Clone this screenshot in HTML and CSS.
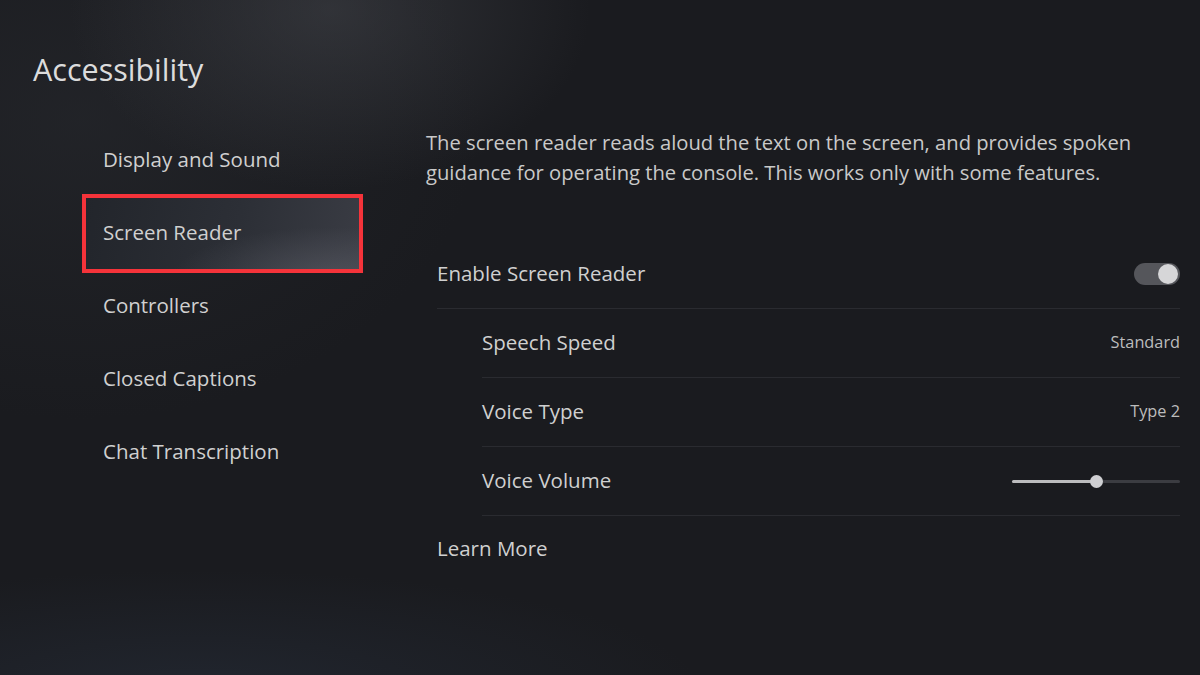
FILE: index.html
```html
<!DOCTYPE html>
<html lang="en">
<head>
<meta charset="utf-8">
<title>Accessibility - Screen Reader</title>
<link rel="stylesheet" href="styles.css">
</head>
<body>
<div class="screen">
  <header class="header">
    <h1 class="title">Accessibility</h1>
  </header>
  <main class="main">
    <nav class="nav">
      <div class="nav-item">Display and Sound</div>
      <div class="nav-item selected">Screen Reader</div>
      <div class="nav-item">Controllers</div>
      <div class="nav-item">Closed Captions</div>
      <div class="nav-item">Chat Transcription</div>
    </nav>
    <section class="content">
      <p class="desc">The screen reader reads aloud the text on the screen, and provides spoken guidance for operating the console. This works only with some features.</p>
      <div class="list">
        <div class="row">
          <span class="label">Enable Screen Reader</span>
          <span class="toggle"><span class="knob"></span></span>
        </div>
        <div class="row sub">
          <span class="label">Speech Speed</span>
          <span class="value">Standard</span>
        </div>
        <div class="row sub">
          <span class="label">Voice Type</span>
          <span class="value">Type 2</span>
        </div>
        <div class="row sub">
          <span class="label">Voice Volume</span>
          <span class="slider"><span class="fill" style="width:50%"></span><span class="thumb" style="left:50%"></span></span>
        </div>
        <div class="row plain">
          <span class="label">Learn More</span>
        </div>
      </div>
    </section>
  </main>
</div>
</body>
</html>
```
FILE: styles.css
```css
* { box-sizing: border-box; }
html, body { margin: 0; padding: 0; }
body {
  width: 1200px;
  height: 675px;
  overflow: hidden;
  font-family: "Open Sans", "Noto Sans", "DejaVu Sans", sans-serif;
  color: #d2d2d2;
  background:
    radial-gradient(ellipse 260px 180px at 330px 10px, rgba(70,72,78,0.5), rgba(70,72,78,0) 100%),
    radial-gradient(ellipse 500px 120px at 200px 690px, rgba(40,48,62,0.5), rgba(40,48,62,0) 100%),
    radial-gradient(ellipse 400px 300px at 80px 120px, rgba(40,42,47,0.55), rgba(40,42,47,0) 100%),
    #1a1b1f;
}
.screen { width: 1200px; height: 675px; display: flex; flex-direction: column; }
.header { height: 100px; padding: 49px 0 0 33px; }
.title {
  margin: 0;
  font-size: 30.5px;
  line-height: 40px;
  font-weight: 400;
  color: #dcdcdc;
}
.main { display: flex; align-items: flex-start; }
.nav {
  width: 426px;
  flex-shrink: 0;
  padding: 24px 0 0 82px;
  display: flex;
  flex-direction: column;
}
.nav-item {
  position: relative;
  width: 281px;
  height: 73px;
  padding: 0 0 3px 21px;
  display: flex;
  align-items: center;
  font-size: 20.5px;
  color: #d0d0d0;
}
.nav-item.selected {
  background:
    radial-gradient(ellipse 160px 50px at 250px 80px, rgba(110,112,122,0.4), rgba(110,112,122,0) 100%),
    linear-gradient(100deg, #22252b 0%, #2c2f36 55%, #3a3c44 100%);
}
.nav-item.selected::after {
  content: "";
  position: absolute;
  left: 0; right: 0; top: -3px; bottom: -3px;
  border: 4px solid #f5333a;
}
.content {
  width: 754px;
  padding-top: 27px;
}
.desc {
  margin: 0;
  width: 730px;
  font-size: 20.2px;
  line-height: 30px;
  color: #c9c9c9;
}
.list {
  margin: 53px 0 0 11px;
  display: flex;
  flex-direction: column;
}
.row {
  height: 69px;
  display: flex;
  align-items: center;
  justify-content: space-between;
  border-bottom: 1px solid #2a2b30;
  font-size: 20.5px;
  color: #d0d0d0;
}
.label { padding-bottom: 2px; }
.row.sub { margin-left: 45px; }
.row.plain { border-bottom: none; }
.row.plain .label { padding-bottom: 6px; }
.value { font-size: 16.3px; color: #bdbdbd; padding-bottom: 2px; }
.toggle {
  width: 46px;
  height: 22px;
  border-radius: 11px;
  background: #55565b;
  position: relative;
  display: inline-block;
}
.knob {
  position: absolute;
  right: 2px;
  top: 1px;
  width: 20px;
  height: 20px;
  border-radius: 50%;
  background: #d6d6d8;
}
.slider {
  position: relative;
  width: 168px;
  height: 3px;
  background: #3b3c41;
  border-radius: 2px;
  display: inline-block;
}
.fill {
  position: absolute;
  left: 0; top: 0; bottom: 0;
  background: #bcbcbe;
  border-radius: 2px;
}
.thumb {
  position: absolute;
  top: -5px;
  width: 13px;
  height: 13px;
  margin-left: -6px;
  border-radius: 50%;
  background: #cfcfd2;
}
```
